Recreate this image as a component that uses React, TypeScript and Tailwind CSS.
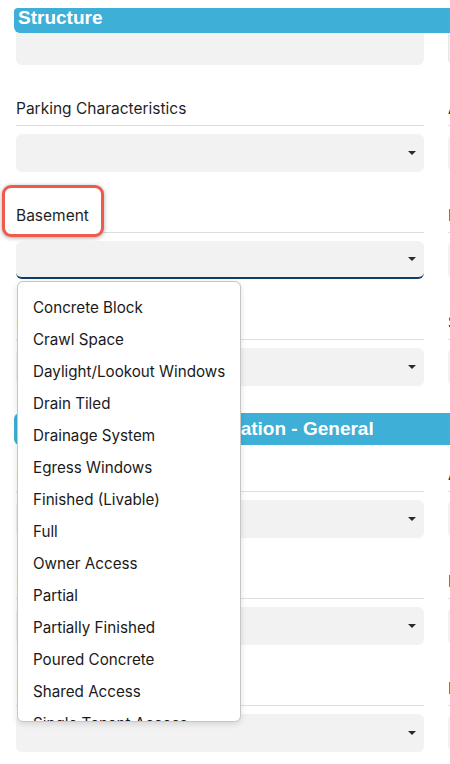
import React from "react";

const Caret = () => (
  <svg width="8" height="4" viewBox="0 0 8 4" aria-hidden>
    <path d="M0 0h8L4 4z" fill="#2a2a2a" />
  </svg>
);

const OPTIONS = [
  "Concrete Block",
  "Crawl Space",
  "Daylight/Lookout Windows",
  "Drain Tiled",
  "Drainage System",
  "Egress Windows",
  "Finished (Livable)",
  "Full",
  "Owner Access",
  "Partial",
  "Partially Finished",
  "Poured Concrete",
  "Shared Access",
  "Single Tenant Access",
  "Slab",
];

function Field({
  label,
  first,
  active,
  highlight,
  dropdown,
  caret = true,
}: {
  label: string;
  first?: boolean;
  active?: boolean;
  highlight?: boolean;
  dropdown?: boolean;
  caret?: boolean;
}) {
  return (
    <div className={first ? "mt-4" : "mt-[30px]"}>
      <div className="relative border-b border-[#dedede] pb-[4px] pt-[2px] text-[15.5px] leading-6 whitespace-nowrap">
        {highlight && (
          <div className="absolute left-[-14px] top-[-17px] h-[52px] w-[102px] rounded-[9px] border-[3px] border-[#ef5a4c] bg-white shadow-[0_1px_4px_rgba(0,0,0,0.35)]" />
        )}
        <span className="relative z-10">{label}</span>
      </div>
      <div
        className={
          "relative mt-2 flex h-[38px] items-center justify-end rounded-md bg-[#f2f2f2] pr-2 " +
          (active ? "border-b-2 border-[#0d3d6b]" : "")
        }
      >
        {caret && <Caret />}
        {dropdown && (
          <div className="absolute left-[1px] top-full z-20 mt-[4px] h-[441px] w-[224px] overflow-hidden rounded-md border border-[#c6c6c6] bg-white pt-[10px] shadow-[0_2px_6px_rgba(0,0,0,0.12)]">
            {OPTIONS.map((o) => (
              <div key={o} className="h-8 whitespace-nowrap pl-[15px] text-[15.2px] leading-8 text-[#1a1a1a]">
                {o}
              </div>
            ))}
          </div>
        )}
      </div>
    </div>
  );
}

export default function App() {
  return (
    <div className="relative h-[764px] w-[450px] overflow-hidden bg-white font-['Inter',sans-serif] text-[#1f1f1f]">
      <div className="pl-[14px] pt-2">
        <div className="h-[25px] w-[900px] rounded-bl-md rounded-tl-sm bg-[#3eafd7] pl-1 font-['Liberation_Sans',sans-serif] text-[19px] font-bold leading-[19px] text-white">
          Structure
        </div>
      </div>
      <div className="flex gap-6 pl-4">
        <div className="w-[408px] shrink-0">
          <div className="h-8 rounded-b-md bg-[#f2f2f2]" />
          <Field label="Parking Characteristics" />
          <Field label="Basement" active highlight dropdown />
          <Field label="Foundation Details" />
        </div>
        <div className="w-[408px] shrink-0">
          <div className="h-8 rounded-b-md border-l border-[#e6e6e6] bg-[#f2f2f2]" />
          <Field label="Architectural Style" />
          <Field label="Levels" />
          <Field label="Stories" />
        </div>
      </div>
      <div className="mt-[27px] pl-[14px]">
        <div className="h-8 w-[900px] rounded-l-md bg-[#3eafd7] pl-[6px] font-['Liberation_Sans',sans-serif] text-[19px] font-bold leading-8 text-white">
          Exterior Features Information - General
        </div>
      </div>
      <div className="flex gap-6 pl-4">
        <div className="w-[408px] shrink-0">
          <Field label="Lot Description" first />
          <Field label="Fencing" />
          <Field label="Road Frontage" />
        </div>
        <div className="w-[408px] shrink-0">
          <Field label="Accessibility" first />
          <Field label="Lot Size" />
          <Field label="Lot Features" />
        </div>
      </div>
    </div>
  );
}
